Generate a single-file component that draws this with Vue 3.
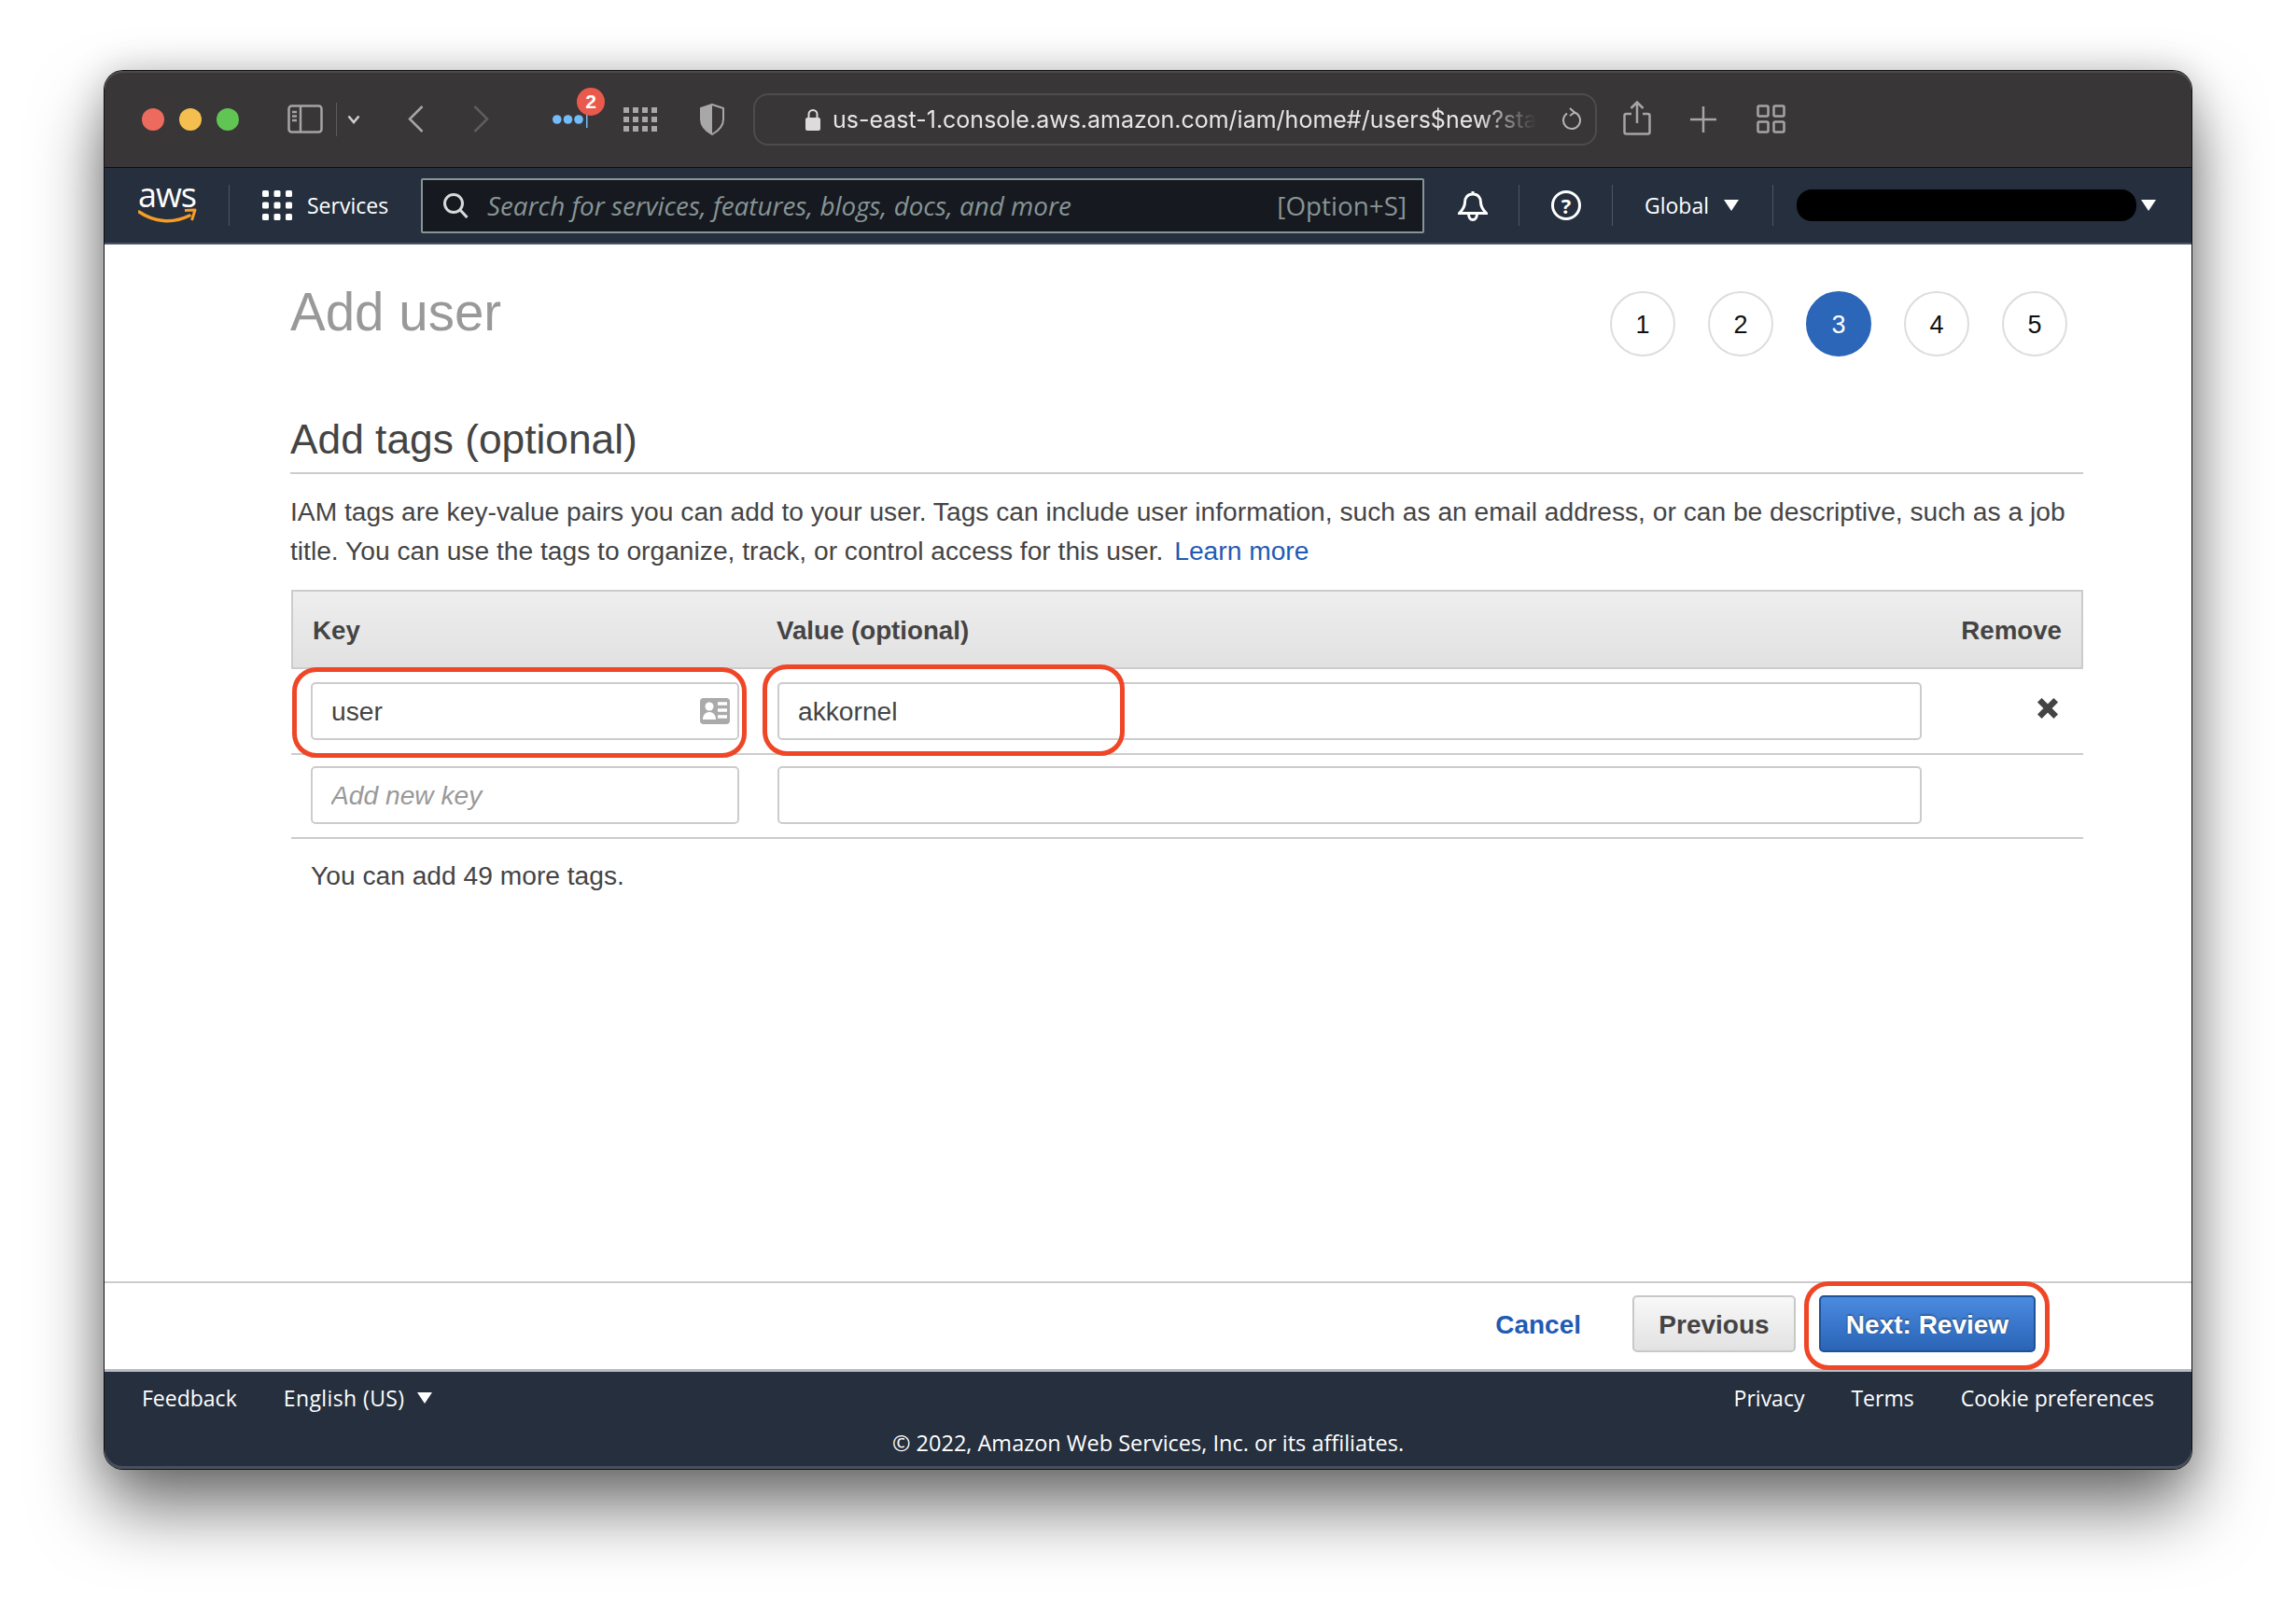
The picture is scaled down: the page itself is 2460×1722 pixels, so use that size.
<script setup>
const steps = [1, 2, 3, 4, 5]
const active = 3
</script>

<template>
  <div class="page">
    <div class="window">
      <header class="toolbar">
        <div class="lights">
          <span class="light red"></span>
          <span class="light yellow"></span>
          <span class="light green"></span>
        </div>
        <svg class="i-sidebar" width="38" height="31" viewBox="0 0 38 31" fill="none" stroke="#a5a5a5" stroke-width="2.5">
          <rect x="1.5" y="1.5" width="35" height="28" rx="3" />
          <path d="M14 1.5v28M5 8h5M5 12.500h5M5 17h5" />
        </svg>
        <span class="tb-divider"></span>
        <svg class="i-chev" width="14" height="10" viewBox="0 0 14 10" fill="none" stroke="#d0d0d0" stroke-width="2.500">
          <path d="M1.500 1.500 7 8l5.500-6.500" />
        </svg>
        <svg class="i-back" width="17" height="29" viewBox="0 0 17 29" fill="none" stroke="#a5a5a5" stroke-width="2.500">
          <path d="M15.500 1 2 14.500 15.500 28" />
        </svg>
        <svg class="i-fwd" width="17" height="29" viewBox="0 0 17 29" fill="none" stroke="#5e5e5e" stroke-width="2.500">
          <path d="M1.500 1 15 14.500 1.500 28" />
        </svg>
        <div class="ext">
          <svg width="38" height="20" viewBox="0 0 38 20">
            <circle cx="4.800" cy="10" r="4.800" fill="#72bcf9" />
            <circle cx="16.500" cy="10" r="4.800" fill="#72bcf9" />
            <circle cx="28" cy="10" r="4.800" fill="#72bcf9" />
            <rect x="36" y="0" width="1.500" height="19" fill="#72bcf9" />
          </svg>
          <span class="badge">2</span>
        </div>
        <svg class="i-grid" width="36" height="26" viewBox="0 0 36 26" fill="#a8a8a8">
          <rect v-for="n in 12" :key="n" :x="((n - 1) % 4) * 10" :y="Math.floor((n - 1) / 4) * 10" width="6" height="6" />
        </svg>
        <svg class="i-shield" width="28" height="34" viewBox="0 0 28 34">
          <path d="M14 1 2 5v12c0 7 5 12 12 16 7-4 12-9 12-16V5z" fill="none" stroke="#a8a8a8" stroke-width="2" />
          <path d="M14 1 2 5v12c0 7 5 12 12 16z" fill="#a8a8a8" />
        </svg>
        <div class="urlbar">
          <svg class="i-lock" width="16" height="24" viewBox="0 0 16 24">
            <path d="M3.500 11V6.500a4.500 4.500 0 0 1 9 0V11" fill="none" stroke="#dcdcdc" stroke-width="2" />
            <rect x="0" y="10" width="16" height="14" rx="2" fill="#dcdcdc" />
          </svg>
          <span class="url">us-east-1.console.aws.amazon.com/iam/home#/users$new?sta</span>
          <svg class="i-reload" width="22" height="26" viewBox="0 0 22 26" fill="none" stroke="#b5b5b5" stroke-width="2">
            <path d="M14 5.500A9 9 0 1 1 6 6.500" />
            <path d="M9 1l5 4.500-5 3.500" />
          </svg>
        </div>
        <svg class="i-share" width="30" height="37" viewBox="0 0 30 37" fill="none" stroke="#a5a5a5" stroke-width="2.500">
          <path d="M9 14H3.500a2 2 0 0 0-2 2v17.500a2 2 0 0 0 2 2h23a2 2 0 0 0 2-2V16a2 2 0 0 0-2-2H21" />
          <path d="M15 24V2M8.500 8 15 1.500 21.500 8" />
        </svg>
        <svg class="i-plus" width="28" height="28" viewBox="0 0 28 28" stroke="#a5a5a5" stroke-width="2.500">
          <path d="M14 0v28M0 14h28" />
        </svg>
        <svg class="i-tabs" width="31" height="31" viewBox="0 0 31 31" fill="none" stroke="#a5a5a5" stroke-width="2.500">
          <rect x="1.500" y="1.500" width="11" height="11" rx="1.500" />
          <rect x="18.500" y="1.500" width="11" height="11" rx="1.500" />
          <rect x="1.500" y="18.500" width="11" height="11" rx="1.500" />
          <rect x="18.500" y="18.500" width="11" height="11" rx="1.500" />
        </svg>
      </header>

      <nav class="awsnav">
        <div class="logo">
          <span class="logo-text">aws</span>
          <svg class="logo-smile" width="64" height="18" viewBox="0 0 64 18" fill="none">
            <path d="M1 4c16 11 36 13 54 4" stroke="#f79c25" stroke-width="3.500" stroke-linecap="round" />
            <path d="M50 2.500l11-.5-3.500 11" stroke="#f79c25" stroke-width="3" stroke-linejoin="round" />
          </svg>
        </div>
        <span class="nav-divider logo-div"></span>
        <svg class="i-services" width="32" height="32" viewBox="0 0 32 32" fill="#fff">
          <rect v-for="n in 9" :key="n" :x="((n - 1) % 3) * 12.500" :y="Math.floor((n - 1) / 3) * 12.500" width="7" height="7" rx="1.500" />
        </svg>
        <span class="services">Services</span>
        <div class="search">
          <svg width="28" height="28" viewBox="0 0 28 28" fill="none" stroke="#d5dbdb" stroke-width="3">
            <circle cx="12" cy="12" r="9.500" />
            <path d="M19 19l7.500 8" />
          </svg>
          <span class="search-ph">Search for services, features, blogs, docs, and more</span>
          <span class="search-key">[Option+S]</span>
        </div>
        <svg class="i-bell" width="32" height="33" viewBox="0 0 32 33" fill="none" stroke="#fff" stroke-width="3">
          <path d="M16 4c-6 0-8.500 4-8.500 9 0 5-2.500 8-6 11.500h29c-3.500-3.500-6-6.500-6-11.500 0-5-2.500-9-8.500-9zM16 1v3" />
          <path d="M11.500 25c0 4 2 6.500 4.500 6.500s4.500-2.500 4.500-6.500" />
        </svg>
        <span class="nav-divider bell-div"></span>
        <div class="help">?</div>
        <span class="nav-divider help-div"></span>
        <span class="global">Global</span>
        <span class="caret global-caret"></span>
        <span class="nav-divider global-div"></span>
        <span class="redact"></span>
        <span class="caret acct-caret"></span>
      </nav>

      <main class="content">
        <div class="title-row">
          <h1>Add user</h1>
          <ol class="steps">
            <li v-for="s in steps" :key="s" :class="{ on: s === active }">{{ s }}</li>
          </ol>
        </div>
        <h2>Add tags (optional)</h2>
        <p class="intro">
          IAM tags are key-value pairs you can add to your user. Tags can include user information, such as an email address, or can be descriptive, such as a job title. You can use the tags to organize, track, or control access for this user.
          <a>Learn more</a>
        </p>

        <div class="tags">
          <div class="row head">
            <div>Key</div>
            <div>Value (optional)</div>
            <div class="rm">Remove</div>
          </div>
          <div class="row top">
            <div class="key-cell">
              <input value="user" readonly />
              <svg class="i-card" viewBox="0 0 32 28">
                <rect width="32" height="28" rx="4" fill="#aaa" />
                <circle cx="10" cy="9" r="4.500" fill="#fff" />
                <path d="M3 23c0-5 3-8 7-8s7 3 7 8z" fill="#fff" />
                <path d="M19 6h10M19 13h10M19 20h10" stroke="#fff" stroke-width="3.500" />
              </svg>
            </div>
            <input value="akkornel" readonly />
            <svg class="i-x" width="24" height="24" viewBox="0 0 22 22">
              <path d="M3 3l16 16M19 3 3 19" stroke="#444" stroke-width="6" stroke-linejoin="round" />
            </svg>
          </div>
          <div class="row">
            <input placeholder="Add new key" readonly />
            <input readonly />
            <span></span>
          </div>
        </div>
        <p class="more">You can add 49 more tags.</p>

        <span class="mark mark-key"></span>
        <span class="mark mark-value"></span>
      </main>

      <div class="actions">
        <a class="cancel">Cancel</a>
        <button class="btn prev">Previous</button>
        <button class="btn next">Next: Review</button>
        <span class="mark mark-next"></span>
      </div>

      <footer class="foot">
        <div class="foot-top">
          <span>Feedback</span>
          <span class="lang">English (US)</span>
          <span class="caret lang-caret"></span>
          <span class="foot-right">Privacy</span>
          <span class="terms">Terms</span>
          <span class="cookie">Cookie preferences</span>
        </div>
        <div class="copy">© 2022, Amazon Web Services, Inc. or its affiliates.</div>
      </footer>
    </div>
  </div>
</template>

<style>
html, body {
  background: #fff;
}
</style>

<style scoped>
.page {
  width: 2460px;
  height: 1722px;
  padding: 76px 0 0 112px;
  box-sizing: border-box;
  overflow: hidden;
  font-family: "Liberation Sans", Arial, sans-serif;
}
.window {
  position: relative;
  width: 2236px;
  height: 1498px;
  display: flex;
  flex-direction: column;
  border-radius: 20px;
  background: #fff;
  box-shadow: 0 0 0 1px #111, 0 42px 75px rgba(0, 0, 0, 0.55), 0 0 40px rgba(0, 0, 0, 0.2);
}

/* safari bar */
.toolbar {
  height: 103px;
  flex: none;
  display: flex;
  align-items: center;
  background: #393637;
  border-bottom: 1px solid #0c0c0c;
  border-radius: 20px 20px 0 0;
  box-shadow: inset 0 2px 0 #4c4a4b;
  padding-left: 40px;
}
.lights {
  display: flex;
  gap: 16px;
}
.light {
  width: 24px;
  height: 24px;
  border-radius: 50%;
}
.red { background: #ed6a5e; }
.yellow { background: #f4bf4f; }
.green { background: #61c554; }
.i-sidebar { margin-left: 52px; }
.tb-divider {
  width: 1px;
  height: 36px;
  margin-left: 14px;
  background: #5c5a5b;
}
.i-chev { margin-left: 11px; }
.i-back { margin-left: 51px; }
.i-fwd { margin-left: 53px; }
.ext {
  position: relative;
  width: 38px;
  height: 20px;
  margin-left: 68px;
}
.ext svg { display: block; }
.badge {
  position: absolute;
  left: 26px;
  top: -24px;
  width: 30px;
  height: 30px;
  border-radius: 50%;
  background: #ea5a4c;
  color: #fff;
  font-size: 21px;
  font-weight: 700;
  line-height: 30px;
  text-align: center;
}
.i-grid { margin-left: 38px; }
.i-shield { margin-left: 45px; }
.urlbar {
  width: 904px;
  height: 56px;
  margin-left: 30px;
  box-sizing: border-box;
  display: flex;
  align-items: center;
  border: 2px solid #4e4c4d;
  border-radius: 16px;
  padding-left: 54px;
  position: relative;
}
.i-lock { flex: none; }
.url {
  width: 769px;
  margin-left: 13px;
  overflow: hidden;
  white-space: nowrap;
  color: #e6e6e6;
  font-family: "Inter", "Liberation Sans", sans-serif;
  font-size: 25px;
  -webkit-mask-image: linear-gradient(to right, #000 90%, transparent 98%);
  mask-image: linear-gradient(to right, #000 90%, transparent 98%);
}
.i-reload { margin-left: 12px; flex: none; }
.i-share { margin-left: 28px; margin-top: -2px; }
.i-plus { margin-left: 42px; }
.i-tabs { margin-left: 43px; }

/* aws nav */
.awsnav {
  height: 80px;
  flex: none;
  display: flex;
  align-items: center;
  background: #252f3e;
  border-bottom: 2px solid #4b5563;
  color: #fff;
  font-family: "Open Sans", "Noto Sans", sans-serif;
  font-size: 23px;
  padding-left: 36px;
}
.logo {
  position: relative;
  width: 64px;
  height: 46px;
}
.logo-text {
  position: absolute;
  left: -2px;
  right: 0;
  top: -10px;
  text-align: center;
  font-size: 36px;
  line-height: 44px;
  letter-spacing: -1px;
}
.logo-smile {
  position: absolute;
  left: 0;
  top: 26px;
}
.nav-divider {
  width: 1px;
  height: 44px;
  background: #4c5766;
}
.logo-div { margin-left: 33px; }
.i-services { margin-left: 35px; }
.services { margin-left: 16px; width: 87px; white-space: nowrap; }
.search {
  width: 1075px;
  height: 59px;
  margin-left: 35px;
  box-sizing: border-box;
  display: flex;
  align-items: center;
  background: #16191f;
  border: 2px solid #879596;
  border-radius: 2px;
  padding: 0 17px 0 21px;
  color: #879596;
  font-size: 27.800px;
}
.search-ph {
  margin-left: 20px;
  font-style: italic;
  white-space: nowrap;
}
.search-key { margin-left: auto; }
.i-bell { margin-left: 36px; }
.bell-div { margin-left: 33px; }
.help {
  width: 32px;
  height: 32px;
  margin-left: 34px;
  box-sizing: border-box;
  border: 3px solid #fff;
  border-radius: 50%;
  font-size: 22px;
  font-weight: 700;
  line-height: 26px;
  text-align: center;
}
.help-div { margin-left: 33px; }
.global { margin-left: 34px; width: 72px; }
.caret {
  width: 0;
  height: 0;
  border-left: 8px solid transparent;
  border-right: 8px solid transparent;
  border-top: 12px solid #fff;
}
.global-caret { margin-left: 13px; }
.global-div { margin-left: 36px; }
.redact {
  width: 364px;
  height: 34px;
  margin-left: 25px;
  border-radius: 16px;
  background: #000;
}
.acct-caret { margin-left: 5px; }

/* page */
.content {
  flex: 1;
  min-height: 0;
  position: relative;
  background: #fff;
  padding: 50px 116px 0 200px;
  color: #444;
}
.title-row {
  display: flex;
  justify-content: space-between;
  height: 70px;
}
h1 {
  margin: 0 0 0 -1px;
  font-size: 56.500px;
  font-weight: 400;
  line-height: 46px;
  color: #999;
}
.steps {
  display: flex;
  gap: 35px;
  margin: 0 17px 0 0;
  padding: 0;
  list-style: none;
}
.steps li {
  width: 70px;
  height: 70px;
  box-sizing: border-box;
  border: 2px solid #ddd;
  border-radius: 50%;
  color: #111;
  font-size: 27px;
  line-height: 68px;
  text-align: center;
}
.steps li.on {
  background: #2b66b8;
  border-color: #2b66b8;
  color: #fff;
}
h2 {
  margin: 67px 0 0 -1px;
  padding-bottom: 13px;
  border-bottom: 2px solid #ccc;
  font-size: 44.300px;
  font-weight: 400;
  line-height: 44px;
  color: #444;
}
.intro {
  margin: 19px 0 0 -1px;
  font-size: 28.200px;
  line-height: 42px;
  color: #444;
}
.intro a {
  margin-left: 4px;
  color: #1f5bb5;
}
.tags {
  margin-top: 21px;
}
.row {
  display: grid;
  grid-template-columns: 459px 1226px 1fr;
  column-gap: 41px;
  align-items: center;
  padding: 12px 0 14px 21px;
  border-bottom: 2px solid #ccc;
}
.row.top { padding-top: 14px; }
.row.head {
  height: 85px;
  box-sizing: border-box;
  padding: 2px 21px 0 21px;
  border: 2px solid #ccc;
  background: linear-gradient(#eee, #e1e1e1);
  font-size: 27.700px;
  font-weight: 700;
  grid-template-columns: 459px 1fr auto;
  column-gap: 38px;
}
.rm { text-align: right; }
input {
  width: 100%;
  height: 62px;
  box-sizing: border-box;
  display: block;
  border: 2px solid #ccc;
  border-radius: 5px;
  outline: none;
  padding: 0 20px;
  background: #fff;
  color: #444;
  font-family: "Liberation Sans", Arial, sans-serif;
  font-size: 28.200px;
}
input::placeholder {
  color: #999;
  font-style: italic;
}
.key-cell { position: relative; }
.i-card {
  position: absolute;
  right: 10px;
  top: 17px;
  width: 32px;
  height: 28px;
}
.i-x {
  justify-self: end;
  margin-right: 26px;
  margin-top: -6px;
}
.more {
  margin: 18px 0 0 21px;
  font-size: 28.200px;
  line-height: 42px;
  color: #444;
}
.mark {
  position: absolute;
  box-sizing: border-box;
  border: 5px solid #ef4627;
  border-radius: 26px;
  pointer-events: none;
}
.mark-key {
  left: 201px;
  top: 453px;
  width: 487px;
  height: 97px;
}
.mark-value {
  left: 705px;
  top: 450px;
  width: 388px;
  height: 98px;
}
.mark-next {
  left: 1821px;
  top: -2px;
  width: 263px;
  height: 95px;
}

/* bottom bar */
.actions {
  position: relative;
  height: 94px;
  flex: none;
  display: flex;
  align-items: flex-start;
  justify-content: flex-end;
  box-sizing: border-box;
  background: #fff;
  border-top: 2px solid #ccc;
  padding: 13px 167px 0 0;
}
.cancel {
  margin-right: 55px;
  color: #1f5bb5;
  font-size: 28px;
  font-weight: 700;
  line-height: 63px;
}
.btn {
  height: 61px;
  border-radius: 5px;
  padding-top: 3px;
  font-family: "Liberation Sans", Arial, sans-serif;
  font-size: 28px;
  font-weight: 700;
}
.prev {
  width: 175px;
  border: 2px solid #c8c8c8;
  background: linear-gradient(#f8f8f8, #e2e2e2);
  color: #444;
}
.next {
  width: 232px;
  margin-left: 25px;
  border: 2px solid #1f5298;
  background: linear-gradient(#4a8be0, #2a64b6);
  color: #fff;
  text-shadow: 0 -1px 2px rgba(0, 0, 0, 0.5);
}

/* aws footer */
.foot {
  height: 107px;
  flex: none;
  box-sizing: border-box;
  background: #252f3e;
  border-radius: 0 0 20px 20px;
  border-top: 3px solid #b9bcc0;
  box-shadow: inset 0 -3px 0 #48505c;
  color: #fff;
  font-family: "Open Sans", "Noto Sans", sans-serif;
  font-size: 23.500px;
  padding: 12px 40px 0;
}
.foot-top {
  display: flex;
  align-items: center;
  height: 32px;
  font-size: 23px;
}
.lang {
  margin-left: 50px;
  letter-spacing: 0.4px;
}
.lang-caret { margin-left: 13px; }
.foot-right { margin-left: auto; }
.terms { margin-left: 50px; }
.cookie { margin-left: 50px; }
.copy {
  margin-top: 16px;
  text-align: center;
  line-height: 32px;
}
</style>
